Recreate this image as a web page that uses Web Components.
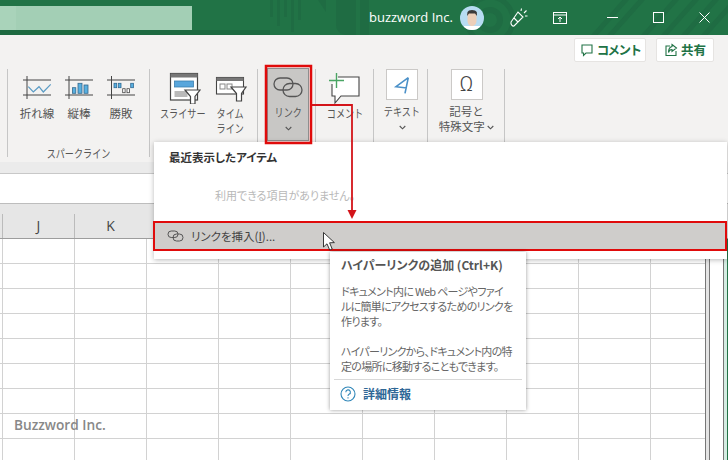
<!DOCTYPE html>
<html lang="ja">
<head>
<meta charset="utf-8">
<title>Excel</title>
<style>
   html, body { margin: 0; padding: 0; background: #fff; }
   body { font-family: "Noto Sans CJK JP", "Noto Sans", sans-serif; }
</style>
</head>
<body>
<x-app>
   <x-titlebar slot="top">buzzword Inc.</x-titlebar>
   <x-ribbon slot="top">
      <x-group slot="groups" label="スパークライン" style="width:142px;--pad:8px">
         <x-btn w="42">
            <svg slot="icon" width="36" height="28" viewBox="0 0 36 28" fill="none"><path d="M8 2V25M4 6H32M4 21H32" stroke="#444"/><path d="M9.3 12.7L14.3 18L20 12.7L24.3 18L31.7 10.3" stroke="#5a9bc4" stroke-width="1.2"/></svg>
            折れ線
         </x-btn>
         <x-btn w="42">
            <svg slot="icon" width="36" height="28" viewBox="0 0 36 28" fill="none"><path d="M8 2V25M4 6H32M4 21H32" stroke="#444"/><g fill="#58b0e0" stroke="#35688c" stroke-width=".8"><rect x="11.4" y="13.7" width="3.4" height="5.6"/><rect x="17" y="9.3" width="4" height="10"/><rect x="23" y="11" width="4" height="8.3"/></g></svg>
            縦棒
         </x-btn>
         <x-btn w="42">
            <svg slot="icon" width="36" height="28" viewBox="0 0 36 28" fill="none"><path d="M8.5 2V25M4 6H32M4 21H32" stroke="#444"/><g fill="#58b0e0" stroke="#2f6a94" stroke-width=".8"><rect x="11" y="9.3" width="2.7" height="4.4"/><rect x="15.3" y="9.3" width="2.7" height="4.4"/><rect x="27.7" y="9.3" width="2.7" height="4.4"/></g><g fill="#fff" stroke="#444" stroke-width=".8"><rect x="19.7" y="14.7" width="2.4" height="4"/><rect x="24" y="14.7" width="2.4" height="4"/></g></svg>
            勝敗
         </x-btn>
      </x-group>
      <x-group slot="groups" style="width:108px;--pad:10px">
         <x-btn w="46">
            <svg slot="icon" width="36" height="32" viewBox="0 0 36 32" fill="none"><rect x="5.5" y="1.5" width="27" height="26.5" fill="#fff" stroke="#444" stroke-width="1.2"/><rect x="5.5" y="1.5" width="27" height="4" fill="#777"/><rect x="9.5" y="9" width="19" height="6" fill="#58a6dc" stroke="#3b7fae" stroke-width=".8"/><rect x="9.5" y="19" width="13" height="6" fill="#b9b9b9"/><path d="M20 18H35L30 24.5V32H25.5V24.5Z" fill="#fff" stroke="#444" stroke-width="1.2"/></svg>
            <x-kana>スライサー</x-kana>
         </x-btn>
         <x-btn w="48">
            <svg slot="icon" width="36" height="32" viewBox="0 0 36 32" fill="none"><rect x="4.5" y="5.5" width="27" height="16.5" fill="#fff" stroke="#444" stroke-width="1.1"/><rect x="4.5" y="5.5" width="27" height="3.5" fill="#777"/><rect x="8" y="12" width="5" height="5" fill="#fff" stroke="#888"/><rect x="15" y="12" width="5" height="5" fill="#fff" stroke="#888"/><path d="M19 15H34L29.5 21.5V29H24.5V21.5Z" fill="#fff" stroke="#444" stroke-width="1.2"/></svg>
            <x-kana>タイム</x-kana><br><x-kana>ライン</x-kana>
         </x-btn>
      </x-group>
      <x-group slot="groups" style="width:58px;--pad:9px">
         <x-btn w="42" active>
            <svg slot="icon" width="32" height="24" viewBox="0 0 32 24" fill="none" stroke="#555" stroke-width="1.3"><rect x="2" y="1" width="19" height="12" rx="6"/><rect x="11" y="6.5" width="19" height="13" rx="6.5"/></svg>
            <x-kana>リンク</x-kana>
            <x-chev slot="chev"></x-chev>
         </x-btn>
      </x-group>
      <x-group slot="groups" style="width:58px;--pad:0px">
         <x-btn w="58">
            <svg slot="icon" width="36" height="32" viewBox="0 0 36 32" fill="none"><path d="M11 5H32V24H14L8 31V24H5V12" stroke="#444" stroke-width="1.1" fill="#fff"/><path d="M9.5 1V16M2 8.5H17" stroke="#4aa564" stroke-width="1.4"/></svg>
            <x-kana>コメント</x-kana>
         </x-btn>
      </x-group>
      <x-group slot="groups" style="width:54px;--pad:1px">
         <x-btn w="54" lift>
            <x-boxed slot="icon"><svg width="26" height="26" viewBox="0 0 26 26" fill="none" stroke="#4a90c8" stroke-width="1.6"><path d="M19.3 5.7L7 14.7L18 16M19.3 5.7L16 21.3"/></svg></x-boxed>
            <x-kana>テキスト</x-kana>
            <x-chev slot="chev"></x-chev>
         </x-btn>
      </x-group>
      <x-group slot="groups" style="width:77px;--pad:0px">
         <x-btn w="77" lift>
            <x-boxed slot="icon"><span style="font:300 21px/1 Roboto,sans-serif;color:#444">Ω</span></x-boxed>
            記号と<br>特殊文字 <x-chev></x-chev>
         </x-btn>
      </x-group>
      <x-action slot="actions" style="width:72px;letter-spacing:-1.6px">
         <svg slot="icon" width="14" height="14" viewBox="0 0 14 14" fill="none" stroke="#217346" stroke-width="1.1"><path d="M2 2H12V10H6L3.5 12.5V10H2Z"/></svg>
         コメント
      </x-action>
      <x-action slot="actions" style="width:58px">
         <svg slot="icon" width="14" height="14" viewBox="0 0 14 14" fill="none" stroke="#217346" stroke-width="1.1"><path d="M6 3H2V12.5H12V8M8 1.5L12.5 5L8 8.5V6.5C6 6.5 5 7.5 4.5 9.5C4.5 6 6 4 8 3.5Z"/></svg>
         共有
      </x-action>
   </x-ribbon>
   <x-sheet slot="top" watermark="Buzzword Inc."></x-sheet>

   <x-link-menu slot="over"></x-link-menu>
   <x-tip slot="over">
      <span slot="title">ハイパーリンクの追加 (Ctrl+K)</span>
      ドキュメント内に Web ページやファイ<br>ルに簡単にアクセスするためのリンクを<br>作ります。<br><br>ハイパーリンクから、ドキュメント内の特<br>定の場所に移動することもできます。
      <span slot="more">詳細情報</span>
   </x-tip>
   <x-marks slot="over"></x-marks>
</x-app>

<script>
const define = (name, html, extra) => {
   customElements.define(name, class extends HTMLElement {
      constructor() {
         super()
         this.attachShadow({ mode: 'open' }).innerHTML = typeof html === 'function' ? html(this) : html
         if (extra) extra(this)
      }
   })
}

define('x-app', `
   <style>
      :host { display: block; position: relative; width: 728px; height: 460px; overflow: hidden; background: #fff; font-feature-settings: "palt"; }
      .flow { display: flex; flex-direction: column; height: 100%; }
   </style>
   <div class="flow"><slot name="top"></slot></div>
   <slot name="over"></slot>`)

// the ribbon font has narrow kana
define('x-kana', `
   <style>
      :host { display: inline-block; transform: scaleX(.79); white-space: nowrap; }
   </style>
   <slot></slot>`)

// title bar
define('x-titlebar', `
   <style>
      :host { display: flex; align-items: center; position: relative; height: 35px; background: #217346; color: #fff; flex: none; }
      .pattern { position: absolute; left: 0; top: 0; }
      .search { position: relative; width: 192px; height: 24px; background: #a3cfb5; align-self: flex-start; margin-top: 6px; }
      .search::before { content: ''; position: absolute; left: 0; top: 0; bottom: 0; width: 16px; background: #a9d3ba; }
      .right { position: relative; display: flex; align-items: center; margin-left: 177px; height: 35px; }
      .name { font: 13px/1 "Open Sans", "Noto Sans", sans-serif; width: 91px; white-space: nowrap; }
      .avatar { width: 24px; height: 24px; margin-right: 24px; }
      .tool { display: flex; justify-content: center; width: 46px; }
      .tool svg { display: block; }
   </style>
   <svg class="pattern" width="728" height="35" fill="none">
      <rect y="30" width="270" height="5" fill="#1e6a41"/>
      <g fill="#1f6c43"><rect x="270" width="3" height="17"/><rect x="277" width="3" height="26"/><rect x="284" width="3" height="17"/><rect x="291" width="3" height="32"/><rect x="298" width="3" height="20"/><path d="M318 0H326V12Z"/><path d="M336 0H356V35H346A10 10 0 0 1 336 25Z"/><rect x="360" width="9" height="35"/></g>
      <g stroke="#1f6c43"><circle cx="490" cy="20" r="10" stroke-width="6"/><circle cx="490" cy="20" r="23" stroke-width="5"/><path d="M590 40L630 -5M606 40L646 -5M640 40L680 -5M660 40L700 -5M680 40L720 -5M700 40L740 -5" stroke-width="5"/></g>
   </svg>
   <div class="search"></div>
   <div class="right">
      <span class="name"><slot></slot></span>
      <svg class="avatar" viewBox="0 0 24 24"><clipPath id="av"><circle cx="12" cy="12" r="12"/></clipPath><g clip-path="url(#av)"><rect width="24" height="24" fill="#b7dcf2"/><rect x="4" y="20" width="16" height="4" fill="#fff"/><path d="M7.5 7H16.5V15C16.5 18 14 20 12 20C10 20 7.5 18 7.5 15Z" fill="#eccfb9"/><path d="M7 10L7.5 6L9 4.5L12 4L15 4.5L16.8 6L17 10L15 7.5H9Z" fill="#3a3a3a"/></g></svg>
      <svg width="22" height="22" viewBox="0 0 22 22" fill="none" stroke="#fff" stroke-width="1.1" style="margin-right:23px"><path d="M3 15L10 5L15 10L6 19C4.5 19.5 2.5 17.5 3 15ZM6 11L10 15M16 6L18.5 3.5M13 4L13.5 1.5M17 9L19.5 9"/></svg>
      <svg width="14" height="12" viewBox="0 0 14 12" fill="none" stroke="#fff" style="margin-right:23px"><rect x=".5" y=".5" width="13" height="11"/><path d="M.5 3H13.5" stroke-width="1"/><path d="M7 10V5M5 7L7 5L9 7"/></svg>
      <div class="tool" style="margin-left:-1px"><svg width="11" height="11"><path d="M0 5.5H11" stroke="#fff"/></svg></div>
      <div class="tool"><svg width="11" height="11"><rect x=".5" y=".5" width="10" height="10" fill="none" stroke="#fff"/></svg></div>
      <div class="tool"><svg width="11" height="11"><path d="M.5 .5L10.5 10.5M10.5 .5L.5 10.5" stroke="#fff"/></svg></div>
   </div>`)

// ribbon
define('x-ribbon', `
   <style>
      :host { display: block; height: 127px; flex: none; background: #f3f2f1; box-sizing: border-box; padding: 3px 14px 0 7px; }
      .actions { display: flex; justify-content: flex-end; gap: 10px; height: 24px; margin-bottom: 7px; }
      .groups { display: flex; height: 88px; border-left: 1px solid #c6c6c6; }
   </style>
   <div class="actions"><slot name="actions"></slot></div>
   <div class="groups"><slot name="groups"></slot></div>`)

define('x-action', `
   <style>
      :host { display: flex; align-items: center; justify-content: center; gap: 3px; background: #fff; border: 1px solid #e6e4e2; border-radius: 2px; font: 700 12.5px/1 "Noto Sans CJK JP", sans-serif; color: #217346; box-sizing: border-box; }
   </style>
   <slot name="icon"></slot><slot></slot>`)

define('x-group', el => `
   <style>
      :host { display: flex; flex-direction: column; flex: none; box-sizing: border-box; padding-left: var(--pad); border-right: 1px solid #c6c6c6; }
      .row { display: flex; height: 72px; flex: none; }
      .label { font: 11.5px/15px "Noto Sans CJK JP", sans-serif; color: #555; text-align: center; margin: 5px 0 0 calc(0px - var(--pad)); white-space: nowrap; transform: scaleX(.79); }
   </style>
   <div class="row"><slot></slot></div>
   <div class="label">${el.getAttribute('label') || ''}</div>`)

define('x-btn', el => `
   <style>
      :host { display: flex; flex-direction: column; align-items: center; flex: none; box-sizing: border-box; width: ${el.getAttribute('w')}px; font: 11.5px/15px "Noto Sans CJK JP", sans-serif; color: #555; text-align: center; white-space: nowrap; }
      :host([active]) { background: #c8c7c5; border: 1px solid #8e8e8e; margin-top: -1px; height: 73px; }
      .icon { height: ${el.hasAttribute('lift') ? 35 : 37}px; display: flex; align-items: center; justify-content: center; margin-top: ${el.hasAttribute('active') ? 4 : 0}px; flex: none; }
      :host([active]) .icon { height: 32px; }
      :host([lift]) .icon { align-items: flex-start; }
      .chev { display: block; height: 15px; }
   </style>
   <div class="icon"><slot name="icon"></slot></div>
   <div><slot></slot></div>
   <div class="chev"><slot name="chev"></slot></div>`)

define('x-boxed', `
   <style>
      :host { display: flex; align-items: center; justify-content: center; width: 32px; height: 31px; box-sizing: border-box; background: #fff; border: 1.5px solid #cbc9c7; }
   </style>
   <slot></slot>`)

define('x-chev', `
   <style>
      :host { display: inline-block; width: 7px; height: 5px; vertical-align: 1px; }
      svg { display: block; }
   </style>
   <svg width="7" height="5" fill="none" stroke="#555" stroke-width="1.1"><path d="M.7 1L3.5 3.8L6.3 1"/></svg>`)

// sheet: band, formula bar, headers, cells
define('x-sheet', el => `
   <style>
      :host { display: flex; flex-direction: column; flex: 1; position: relative; --line: #d2d2d2; }
      .band { height: 11px; background: #ebebeb; border-bottom: 1px solid #c8c8c8; }
      .formula { height: 29px; background: #fff; border-bottom: 1px solid #bdbdbd; }
      .head { display: flex; background: #e6e6e6; border-bottom: 1.5px solid #9d9d9d; padding-left: 2px; box-sizing: border-box; height: 35px; }
      .head div { width: 72px; height: 24px; margin-top: 10px; box-sizing: border-box; border-left: 1px solid #bbb; font: 14px/24px "Open Sans", "Noto Sans", sans-serif; color: #444; text-align: center; }
      .body { flex: 1; position: relative; background-color: #fff;
         background-image: linear-gradient(to right, var(--line) 1px, transparent 1px), linear-gradient(to bottom, transparent 24px, var(--line) 24px);
         background-size: 72px 25px; background-position: 2px 0, 0 0; }
      .mark { font: 600 13.7px/1 "Open Sans", "Noto Sans", sans-serif; color: #888; position: absolute; left: 14px; top: 179px; }
      .scroll { position: absolute; right: 0; top: 0; bottom: 0; width: 23px; box-sizing: border-box; background: #fff; display: flex; }
      .scroll i { display: block; }
   </style>
   <div class="band"></div>
   <div class="formula"></div>
   <div class="head"><div>J</div><div>K</div></div>
   <div class="body">
      <span class="mark">${el.getAttribute('watermark')}</span>
      <div class="scroll">
         <i style="width:1px;background:#777"></i><i style="width:3px;background:#e4e4e4"></i><i style="width:1px;background:#777"></i>
         <i style="width:13px;background:#fff"></i><i style="width:1px;background:#777"></i><i style="width:3px;background:#d4ece2"></i><i style="width:1px;background:#217346"></i>
      </div>
   </div>`)

// menu under the link button
define('x-link-menu', `
   <style>
      :host { position: absolute; left: 154px; top: 142px; width: 573px; height: 117px; background: #fff; box-shadow: 0 1px 5px rgba(0,0,0,.28); display: flex; flex-direction: column; font-family: "Noto Sans CJK JP", sans-serif; }
      .head { font-weight: 700; font-size: 11.5px; line-height: 16px; color: #333; padding: 7px 0 0 15px; height: 23px; box-sizing: border-box; }
      .empty { font-size: 11px; line-height: 16px; color: #b8b8b8; padding: 22px 0 0 61px; height: 56px; box-sizing: border-box; white-space: nowrap; }
      .item { display: flex; align-items: center; gap: 7px; height: 30px; margin-left: -1px; box-sizing: border-box; padding-left: 12px; background: #cfcdcb; border: 2px solid #e00b0b; font-size: 11.5px; color: #444; }
      u { text-underline-offset: 1px; }
   </style>
   <div class="head">最近表示したアイテム</div>
   <div class="empty">利用できる項目がありません。</div>
   <div class="item">
      <svg width="17" height="12" viewBox="0 0 17 12" fill="none" stroke="#555" stroke-width="1"><rect x="1" y="1" width="10" height="6.5" rx="3.2"/><rect x="6" y="4" width="10" height="7" rx="3.5"/></svg>
      <span>リンクを挿入(<u>I</u>)...</span>
   </div>`)

// tooltip
define('x-tip', `
   <style>
      :host { position: absolute; left: 330px; top: 252px; width: 196px; height: 158px; box-sizing: border-box; background: #fff; box-shadow: 0 0 4px rgba(0,0,0,.4); padding: 5px 4px 0; display: flex; flex-direction: column; font-family: "Noto Sans CJK JP", sans-serif; }
      .title { font-weight: 700; font-size: 12px; line-height: 16px; color: #555; padding: 0 7px; white-space: nowrap; }
      .text { font-size: 11px; line-height: 15px; letter-spacing: -.7px; color: #666; padding: 11px 7px 0; white-space: nowrap; height: 106px; box-sizing: border-box; }
      .more { border-top: 1px solid #d8d8d8; display: flex; align-items: center; gap: 7px; padding: 6px 0 0 6px; font-weight: 700; font-size: 12px; line-height: 16px; color: #2f6796; }
   </style>
   <div class="title"><slot name="title"></slot></div>
   <div class="text"><slot></slot></div>
   <div class="more">
      <svg width="16" height="16" viewBox="0 0 16 16" fill="none" stroke="#2f86b8" stroke-width="1.1"><circle cx="8" cy="8" r="7"/><path d="M5.8 6.2A2.3 2.3 0 1 1 9 8.3C8.2 8.7 8 9.2 8 10"/><path d="M8 11.3V12.6"/></svg>
      <slot name="more"></slot>
   </div>`)

// red markings and the pointer
define('x-marks', `
   <style>
      :host { position: absolute; left: 0; top: 0; width: 728px; height: 460px; pointer-events: none; }
      svg { position: absolute; left: 0; top: 0; }
   </style>
   <svg width="728" height="460" fill="none">
      <rect x="266" y="66" width="45" height="77" stroke="#e00b0b" stroke-width="2.5"/>
      <path d="M312 105H352V211" stroke="#d3141a" stroke-width="1.8"/>
      <path d="M347.5 210H356.5L352 219Z" fill="#d3141a"/>
      <path d="M323.5 232.5V247L327 243.8L329.7 250L332.2 249L329.6 242.8L334.4 242.6Z" fill="#fff" stroke="#222" stroke-width=".9"/>
   </svg>`)
</script>
</body>
</html>
